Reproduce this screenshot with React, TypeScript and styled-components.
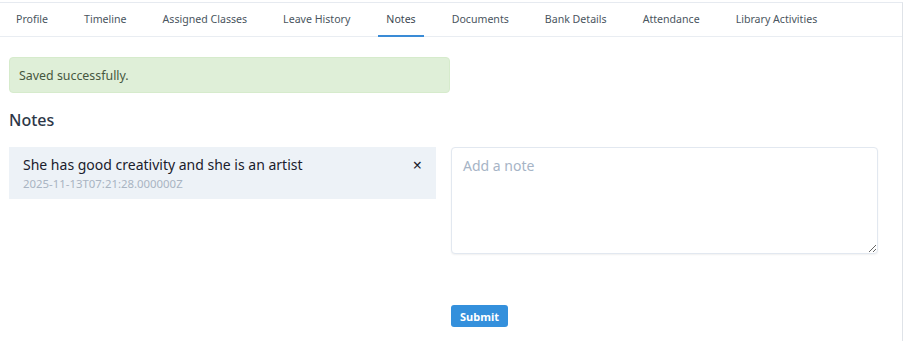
import styled, { createGlobalStyle } from 'styled-components';

const tabs = [
  'Profile',
  'Timeline',
  'Assigned Classes',
  'Leave History',
  'Notes',
  'Documents',
  'Bank Details',
  'Attendance',
  'Library Activities',
];

const notes = [
  {
    text: 'She has good creativity and she is an artist',
    date: '2025-11-13T07:21:28.000000Z',
  },
];

const GlobalStyle = createGlobalStyle`
  body {
    margin: 0;
    background: #ffffff;
    font-family: "Noto Sans", "Open Sans", sans-serif;
  }
`;

const App: React.FC = () => {
  return (
    <>
      <GlobalStyle />
      <Card>
        <TabBar>
          {tabs.map((t) => (
            <Tab key={t} active={t === 'Notes'}>
              {t}
            </Tab>
          ))}
        </TabBar>
        <Body>
          <Alert>Saved successfully.</Alert>
          <Title>Notes</Title>
          <Columns>
            <NoteList>
              {notes.map((n) => (
                <NoteItem key={n.date}>
                  <NoteText>
                    <NoteBody>{n.text}</NoteBody>
                    <NoteDate>{n.date}</NoteDate>
                  </NoteText>
                  <CloseButton>×</CloseButton>
                </NoteItem>
              ))}
            </NoteList>
            <Form>
              <TextArea placeholder="Add a note" />
              <SubmitButton>Submit</SubmitButton>
            </Form>
          </Columns>
        </Body>
      </Card>
    </>
  );
};

export default App;

const Card = styled.div`
  margin-top: 2px;
  width: 903px;
  height: 339px;
  box-sizing: border-box;
  border-top: 1px solid #e6eaf0;
  border-right: 1px solid #dfe3e8;
  background: #ffffff;
`;

const TabBar = styled.div`
  display: flex;
  gap: 20px;
  padding: 0 8px;
  height: 33px;
  border-bottom: 1px solid #e9edf2;
`;

const Tab = styled.div<{ active?: boolean }>`
  display: flex;
  align-items: center;
  padding: 0 8px 1px;
  font-size: 10.6px;
  color: ${(p) => (p.active ? '#3d4852' : '#4a5560')};
  border-bottom: 2px solid ${(p) => (p.active ? '#3a8bd6' : 'transparent')};
  margin-bottom: -1px;
  white-space: nowrap;
`;

const Body = styled.div`
  padding: 20px 25px 0 9px;
`;

const Alert = styled.div`
  width: 441px;
  height: 36px;
  box-sizing: border-box;
  padding: 0 9px;
  display: flex;
  align-items: center;
  background: #dfefd8;
  border: 1px solid #d6ebcc;
  border-radius: 4px;
  color: #46573f;
  font-size: 12.4px;
`;

const Title = styled.h2`
  margin: 16px 0 16px;
  font-size: 16px;
  font-weight: 500;
  color: #2d3748;
  line-height: 22px;
`;

const Columns = styled.div`
  display: grid;
  grid-template-columns: 427px 427px;
  gap: 15px;
`;

const NoteList = styled.div`
  display: flex;
  flex-direction: column;
  gap: 8px;
`;

const NoteItem = styled.div`
  display: flex;
  align-items: flex-start;
  justify-content: space-between;
  height: 52px;
  box-sizing: border-box;
  padding: 8px 14px 0 14px;
  background: #edf2f7;
`;

const NoteText = styled.div`
  display: flex;
  flex-direction: column;
`;

const NoteBody = styled.div`
  font-size: 14px;
  color: #1a202c;
  line-height: 20px;
`;

const NoteDate = styled.div`
  font-size: 11.4px;
  color: #a9b4c2;
  line-height: 18px;
`;

const CloseButton = styled.button`
  border: none;
  background: none;
  padding: 0;
  margin-top: 1px;
  font-size: 16px;
  line-height: 18px;
  color: #1a202c;
  cursor: pointer;
  font-family: inherit;
`;

const Form = styled.div`
  display: flex;
  flex-direction: column;
  align-items: flex-start;
`;

const TextArea = styled.textarea`
  width: 427px;
  height: 107px;
  box-sizing: border-box;
  padding: 8px 11px;
  border: 1px solid #e2e8f0;
  border-radius: 4px;
  box-shadow: 0 1px 2px rgba(0, 0, 0, 0.06);
  font-family: inherit;
  font-size: 14px;
  color: #2d3748;
  outline: none;

  &::placeholder {
    color: #a6b4c6;
  }
`;

const SubmitButton = styled.button`
  margin-top: 51px;
  height: 22px;
  padding: 0 9px;
  border: none;
  border-radius: 3px;
  background: #3490dc;
  color: #ffffff;
  font-family: inherit;
  font-size: 11px;
  font-weight: 700;
  cursor: pointer;
`;
